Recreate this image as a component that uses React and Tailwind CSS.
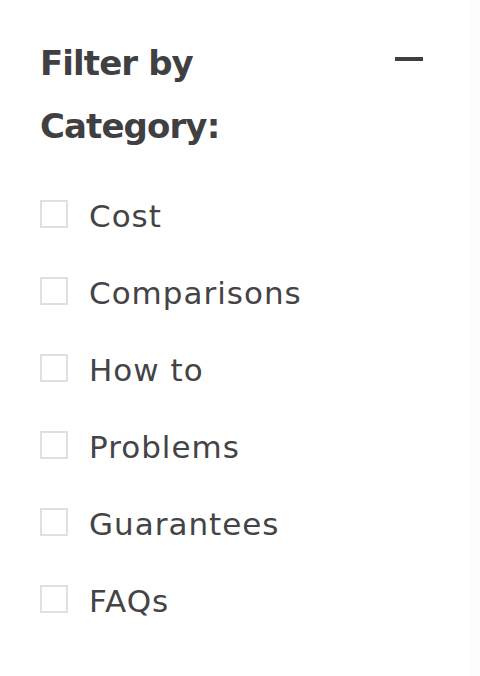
import { useState } from 'react'

const categories = ['Cost', 'Comparisons', 'How to', 'Problems', 'Guarantees', 'FAQs']

export default function App() {
  const [checked, setChecked] = useState({})

  return (
    <div className="flex min-h-[676px] bg-white" style={{ fontFamily: '"DejaVu Sans", sans-serif' }}>
      <div className="w-[470px] pl-10 pr-[47px] pt-8">
        {/* Heading */}
        <div className="flex justify-between items-start">
          <h2 className="text-[34px] leading-[63px] font-bold tracking-[-0.9px] text-[#404042] w-[260px]">
            Filter by Category:
          </h2>
          <button className="mt-[25px] w-7 h-1 bg-[#3f3f41]" aria-label="Collapse" />
        </div>

        {/* Options */}
        <ul className="mt-[42px] flex flex-col gap-[49px]">
          {categories.map((c) => (
            <li key={c} className="flex items-center h-7">
              <button
                onClick={() => setChecked({ ...checked, [c]: !checked[c] })}
                className={`w-7 h-7 border-2 border-[#e0e0e0] ${checked[c] ? 'bg-[#404042]' : 'bg-white'}`}
              />
              <span className="ml-[21px] mt-1 text-[31px] leading-7 tracking-[1px] text-[#444446]">{c}</span>
            </li>
          ))}
        </ul>
      </div>
      <div className="flex-1 bg-[#fdfdfd]" />
    </div>
  )
}
